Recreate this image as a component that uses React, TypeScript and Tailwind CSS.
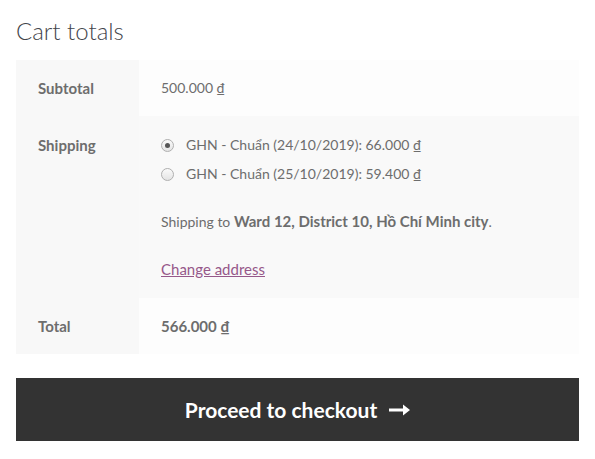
export default function App() {
  return (
    <div className="bg-white w-[595px] h-[459px] px-4 pt-[15px] text-[#6d6d6d]" style={{ fontFamily: "Lato, 'Noto Sans', sans-serif" }}>
      <h2 className="text-[24px] font-light leading-[32px] text-[#43454b] mb-[13px]">Cart totals</h2>
      <table className="w-full border-collapse text-[14px] leading-6">
        <tbody>
          <tr>
            <th className="w-[123px] bg-[#f8f8f8] px-[22px] py-4 text-left text-[15px] font-bold align-top">Subtotal</th>
            <td className="bg-[#fdfdfd] px-[22px] py-4">500.000 ₫</td>
          </tr>
          <tr>
            <th className="bg-[#f8f8f8] px-[22px] pt-[17px] pb-[17px] text-left text-[15px] font-bold align-top">Shipping</th>
            <td className="bg-[#f9f9f9] px-[22px] pt-[17px] pb-[17px]">
              <ul className="flex flex-col gap-[5px]">
                <li className="flex items-center h-6">
                  <span className="w-[13px] h-[13px] rounded-full border border-[#b0b0b0] bg-gradient-to-b from-[#fafafa] to-[#e4e4e4] flex items-center justify-center mr-[12px]">
                    <span className="w-[5px] h-[5px] rounded-full bg-[#555]"></span>
                  </span>
                  GHN - Chuẩn (24/10/2019): 66.000 ₫
                </li>
                <li className="flex items-center h-6">
                  <span className="w-[13px] h-[13px] rounded-full border border-[#b0b0b0] bg-gradient-to-b from-[#fafafa] to-[#e4e4e4] mr-[12px]"></span>
                  GHN - Chuẩn (25/10/2019): 59.400 ₫
                </li>
              </ul>
              <p className="mt-[23px] h-6">
                Shipping to <strong className="font-bold text-[15px]">Ward 12, District 10, Hồ Chí Minh city</strong>.
              </p>
              <p className="mt-6 h-6">
                <a className="text-[#96588a] underline text-[15px]">Change address</a>
              </p>
            </td>
          </tr>
          <tr>
            <th className="bg-[#f8f8f8] px-[22px] py-4 text-left text-[15px] font-bold align-top">Total</th>
            <td className="bg-[#fdfdfd] px-[22px] py-4 font-bold text-[15px]">566.000 ₫</td>
          </tr>
        </tbody>
      </table>
      <button className="mt-6 w-full h-[63px] bg-[#333333] text-white text-[21px] font-bold flex items-center justify-center gap-3">
        <span className="mt-[1px]">Proceed to checkout</span>
        <svg width="21" height="14" viewBox="0 0 21 14" fill="white">
          <path d="M0 5.5h14V1.5l7 5.5-7 5.5v-4H0z" />
        </svg>
      </button>
    </div>
  );
}
